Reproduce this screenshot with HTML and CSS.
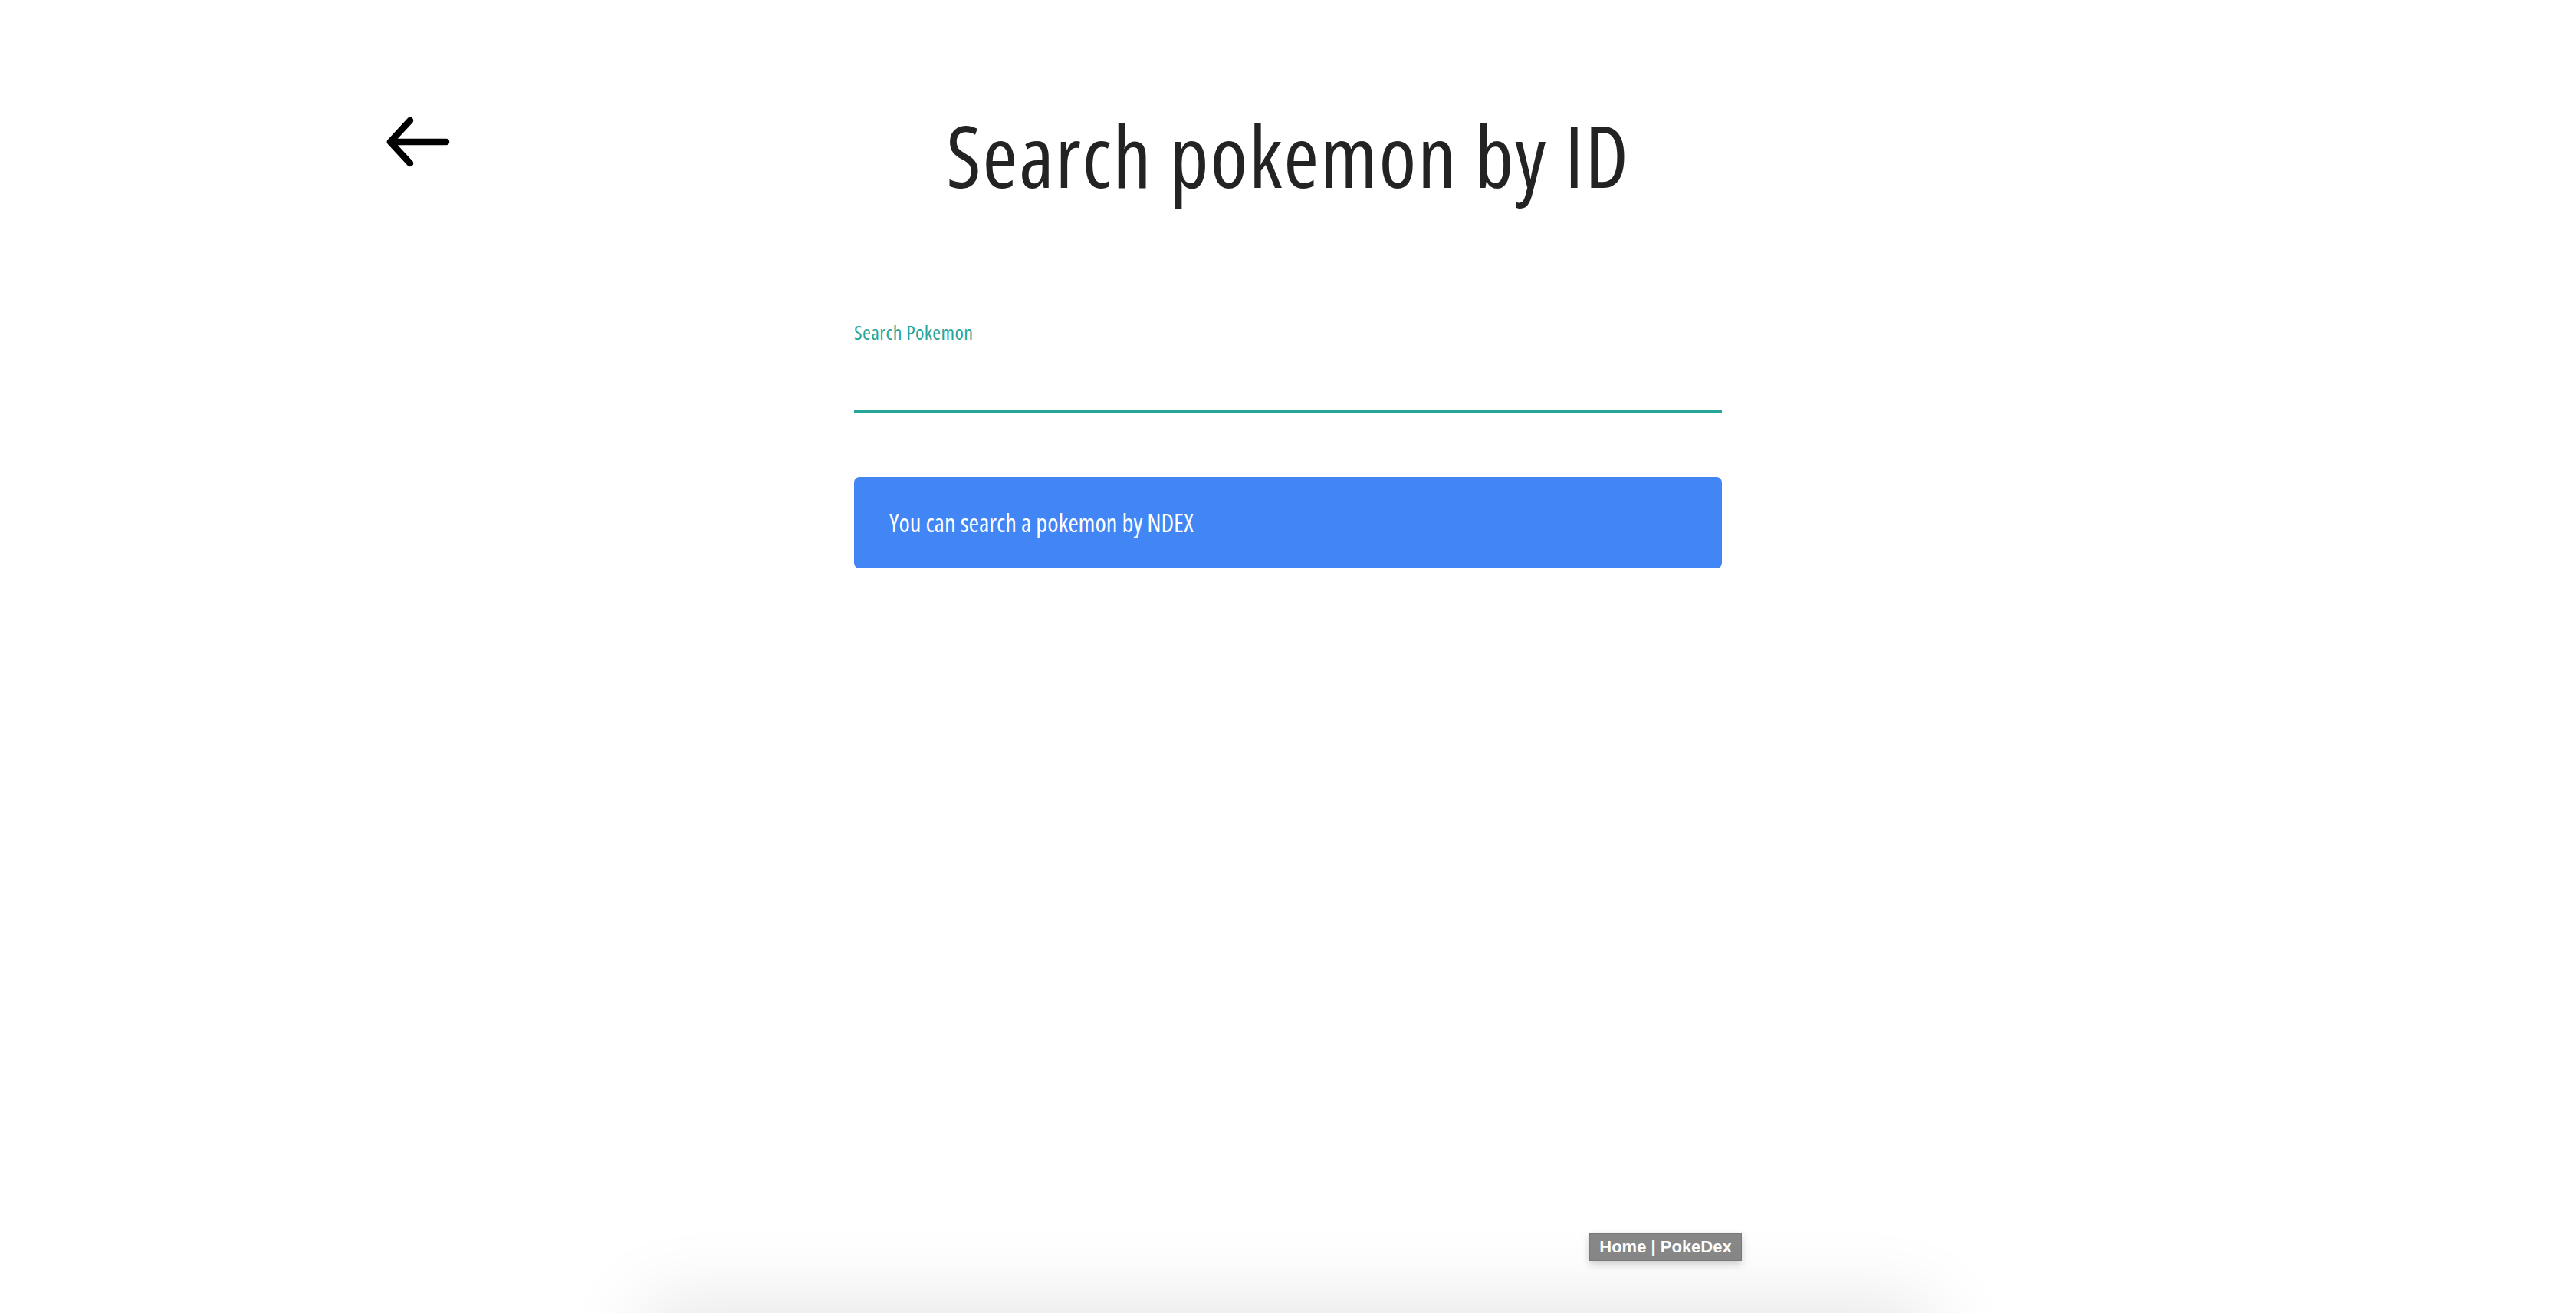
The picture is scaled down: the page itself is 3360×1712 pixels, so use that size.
FILE: index.html
```html
<!DOCTYPE html>
<html lang="en">
<head>
<meta charset="utf-8">
<title>Search pokemon by ID</title>
<link rel="stylesheet" href="styles.css">
</head>
<body>
<header class="top">
  <a class="back" href="#" aria-label="Back">
    <svg class="back-icon" width="90" height="72" viewBox="0 0 90 72"><path d="M81 36 H8 M34 8 L8 36 L34 64" fill="none" stroke="#000" stroke-width="8.5" stroke-linecap="round" stroke-linejoin="round"/></svg>
  </a>
  <h1 class="title">Search pokemon by ID</h1>
  <div class="spacer"></div>
</header>
<main class="content">
  <div class="field">
    <label class="field-label" for="q">Search Pokemon</label>
    <input id="q" class="field-input" type="text">
  </div>
  <div class="notice">You can search a pokemon by NDEX</div>
</main>
<div class="tooltip">Home | PokeDex</div>
<div class="footer-shadow"></div>
</body>
</html>
```
FILE: styles.css
```css
html, body { margin: 0; padding: 0; background: #fff; }
body {
  font-family: "Open Sans", "Noto Sans", sans-serif;
  font-stretch: 75%;
  color: #222;
  height: 1712px;
  overflow: hidden;
  position: relative;
}
.top {
  display: grid;
  grid-template-columns: 1fr auto 1fr;
  align-items: start;
  padding: 147px 501px 0;
}
.back { display: block; width: 90px; height: 72px; margin-top: 2px; }
.back-icon { display: block; }
.title {
  margin: 0;
  font-size: 111px;
  line-height: 111px;
  font-weight: 400;
  letter-spacing: 1.8px;
  color: #232323;
}
.content {
  width: 1132px;
  margin: 0 auto;
  padding-top: 160px;
}
.field { display: flex; flex-direction: column; }
.field-label { font-size: 26px; letter-spacing: 0.4px; color: #26a69a; line-height: 30px; }
.field-input {
  border: 0;
  border-bottom: 4px solid #26a69a;
  height: 86px;
  padding: 0;
  outline: none;
  font: inherit;
  background: transparent;
}
.notice {
  margin-top: 84px;
  height: 119px;
  display: flex;
  align-items: center;
  padding: 0 46px;
  background: #4285f4;
  color: #fff;
  border-radius: 7px;
  font-size: 32.5px;
}
.tooltip {
  position: absolute;
  left: 2073px;
  top: 1608px;
  width: 199px;
  height: 36px;
  box-sizing: border-box;
  background: #888;
  border: 1px solid #7a7a7a;
  color: #fff;
  font-family: "Liberation Sans", Arial, sans-serif;
  font-stretch: normal;
  font-weight: 700;
  font-size: 22px;
  display: flex;
  align-items: center;
  justify-content: center;
  box-shadow: 0 4px 10px rgba(0,0,0,0.2);
}
.footer-shadow {
  position: absolute;
  left: 850px;
  width: 1660px;
  top: 1712px;
  height: 200px;
  box-shadow: 0 0 110px 10px rgba(0,0,0,0.11);
}
```
